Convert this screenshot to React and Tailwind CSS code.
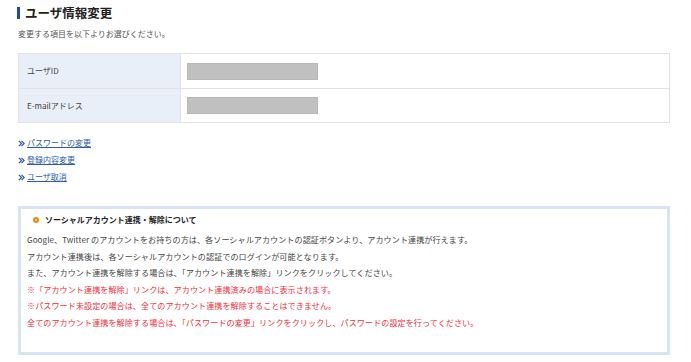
const font = { fontFamily: '"Noto Sans CJK JP", "Noto Sans", sans-serif' }

const rows = [
  { label: 'ユーザID' },
  { label: 'E-mailアドレス' },
]

const links = ['パスワードの変更', '登録内容変更', 'ユーザ取消']

function Chevrons() {
  return (
    <svg viewBox="0 0 8 8" className="w-[7px] h-[7px] shrink-0 text-[#2a5ba8]" fill="none" stroke="currentColor" strokeWidth="1.4">
      <path d="M1 1l3 3-3 3M4 1l3 3-3 3" />
    </svg>
  )
}

export default function App() {
  return (
    <div className="w-[691px] h-[362px] bg-white overflow-hidden" style={font}>
      <div className="pl-[18px] pr-[21px] pt-[7px]">
        {/* Title */}
        <h1 className="border-l-[3px] border-[#1e4d9e] pl-[5px] h-[12px] flex items-center text-[12.5px] font-bold text-[#222] leading-none -ml-[1px]">
          ユーザ情報変更
        </h1>
        <p className="mt-[9px] text-[8px] leading-[12px] text-[#555]">変更する項目を以下よりお選びください。</p>

        {/* Info table */}
        <div className="mt-[13px] border border-[#e2e2e2]">
          {rows.map((r, i) => (
            <div key={r.label} className={`flex h-[34px] ${i > 0 ? 'border-t border-[#e2e2e2]' : ''}`}>
              <div className="w-[162px] bg-[#e9eff8] border-r border-[#e2e2e2] flex items-center pl-[8px] text-[8px] text-[#444]">
                {r.label}
              </div>
              <div className="flex-1 flex items-center pl-[6px]">
                <div className="w-[131px] h-[17px] bg-[#c0c0c0] border border-[#b8b8b8]" />
              </div>
            </div>
          ))}
        </div>

        {/* Links */}
        <div className="mt-[14px] flex flex-col gap-[5px]">
          {links.map((l) => (
            <a key={l} href="#" className="flex items-center gap-[2px] text-[8px] leading-[12px] text-[#2a5ba8] underline">
              <Chevrons />
              <span>{l}</span>
            </a>
          ))}
        </div>

        {/* Social account box */}
        <div className="mt-[23px] border-[3px] border-[#d6e4f6] h-[149px] pl-[6px] pt-[5px]">
          <div className="flex items-center gap-[6px] pl-[6px] text-[8px] font-bold text-[#222] leading-[12px]">
            <span className="w-[6px] h-[6px] rounded-full border-2 border-[#f08a00] bg-[#fff3e0]" />
            <span>ソーシャルアカウント連携・解除について</span>
          </div>
          <div className="mt-[6px] text-[8.1px] leading-[16.5px] tracking-[0.05px]">
            <p className="text-[#444]">Google、Twitter のアカウントをお持ちの方は、各ソーシャルアカウントの認証ボタンより、アカウント連携が行えます。</p>
            <p className="text-[#444]">アカウント連携後は、各ソーシャルアカウントの認証でのログインが可能となります。</p>
            <p className="text-[#444]">また、アカウント連携を解除する場合は、「アカウント連携を解除」リンクをクリックしてください。</p>
            <p className="text-[#f0303a]">※「アカウント連携を解除」リンクは、アカウント連携済みの場合に表示されます。</p>
            <p className="text-[#f0303a]">※パスワード未設定の場合は、全てのアカウント連携を解除することはできません。</p>
            <p className="text-[#f0303a]">全てのアカウント連携を解除する場合は、「パスワードの変更」リンクをクリックし、パスワードの設定を行ってください。</p>
          </div>
        </div>
      </div>
    </div>
  )
}
